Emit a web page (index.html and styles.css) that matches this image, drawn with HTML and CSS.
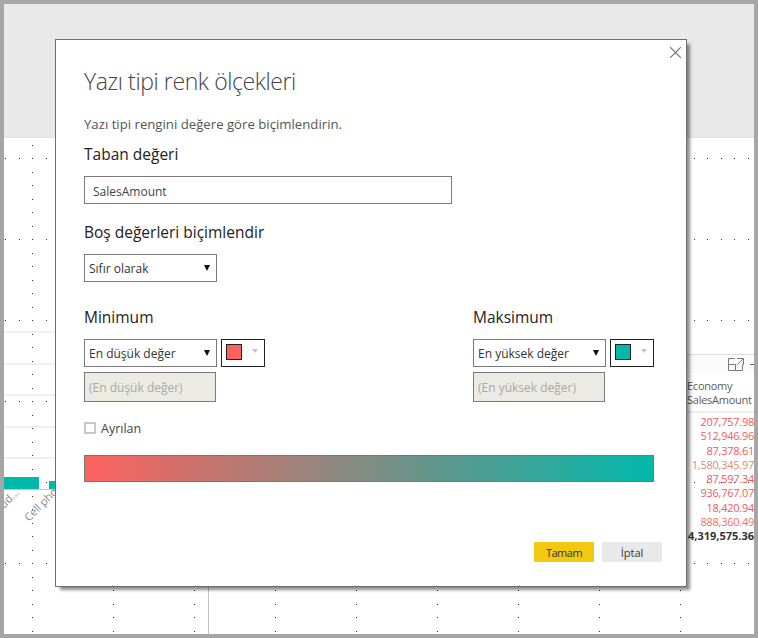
FILE: index.html
```html
<!DOCTYPE html>
<html lang="tr">
<head>
    <meta charset="UTF-8">
    <title>Yazı tipi renk ölçekleri</title>
    <link rel="stylesheet" href="styles.css">
</head>
<body>
    <div id="app">
        <div class="ribbon"></div>
        <div class="canvas">
            <svg class="dots" width="750" height="496">
                <defs>
                    <pattern id="dotCols" width="81" height="27" patternUnits="userSpaceOnUse">
                        <rect x="28" y="7" width="1" height="1"/>
                        <rect x="28" y="20" width="1" height="1"/>
                    </pattern>
                    <pattern id="dotRows" width="27" height="81" patternUnits="userSpaceOnUse">
                        <rect x="1" y="20" width="1" height="1"/>
                        <rect x="15" y="20" width="1" height="1"/>
                    </pattern>
                </defs>
                <rect width="750" height="496" fill="url(#dotCols)"/>
                <rect width="750" height="496" fill="url(#dotRows)"/>
            </svg>

            <div class="chart">
                <div class="chart-line"></div>
                <div class="chart-line"></div>
                <div class="chart-line"></div>
                <div class="chart-line"></div>
                <div class="chart-line"></div>
                <div class="bars">
                    <div class="bar bar-a"></div>
                    <div class="bar bar-b"></div>
                </div>
                <span class="axis-label label-a">ud...</span>
                <span class="axis-label label-b">Cell phones</span>
            </div>
            <div class="divider"></div>

            <div class="table-visual">
                <div class="table-tools">
                    <svg width="16" height="13" viewBox="0 0 16 13" fill="none" stroke="#7a7a7a">
                        <path d="M6.5 .5H.5V12.5H14.5V6.5M.5 6.5H7.5V12.5M9 .5H15.5V7M15 1L9 7"/>
                    </svg>
                    <span class="tools-more"></span>
                </div>
                <div class="table-head">Economy<br>SalesAmount</div>
                <div class="table-rows">
                    <div class="c1">207,757.98</div>
                    <div class="c2">512,946.96</div>
                    <div class="c1">87,378.61</div>
                    <div class="c3">1,580,345.97</div>
                    <div class="c1">87,597.34</div>
                    <div class="c2">936,767.07</div>
                    <div class="c1">18,420.94</div>
                    <div class="c4">888,360.49</div>
                    <div class="total">4,319,575.36</div>
                </div>
            </div>
        </div>

        <div class="dialog">
            <button class="close">
                <svg width="11" height="11" viewBox="0 0 11 11" stroke="#6e6e6e" stroke-width="1.1">
                    <path d="M0 0L11 11M11 0L0 11"/>
                </svg>
            </button>
            <h1>Yazı tipi renk ölçekleri</h1>
            <p class="intro">Yazı tipi rengini değere göre biçimlendirin.</p>

            <h2>Taban değeri</h2>
            <div class="text-field">SalesAmount</div>

            <h2 class="blank-title">Boş değerleri biçimlendir</h2>
            <div class="select blank-select">Sıfır olarak<span class="caret"></span></div>

            <div class="scale">
                <div class="scale-col">
                    <h2>Minimum</h2>
                    <div class="pick-row">
                        <div class="select">En düşük değer<span class="caret"></span></div>
                        <div class="swatch-btn"><span class="swatch swatch-min"></span><span class="swatch-caret"></span></div>
                    </div>
                    <div class="disabled-field">(En düşük değer)</div>
                </div>
                <div class="scale-col">
                    <h2>Maksimum</h2>
                    <div class="pick-row">
                        <div class="select">En yüksek değer<span class="caret"></span></div>
                        <div class="swatch-btn"><span class="swatch swatch-max"></span><span class="swatch-caret"></span></div>
                    </div>
                    <div class="disabled-field">(En yüksek değer)</div>
                </div>
            </div>

            <label class="check"><span class="box"></span>Ayrılan</label>
            <div class="gradient"></div>

            <div class="actions">
                <button class="btn btn-primary">Tamam</button>
                <button class="btn">İptal</button>
            </div>
        </div>
    </div>
</body>
</html>
```

FILE: styles.css
```css
* {
    box-sizing: border-box;
}
html, body {
    margin: 0;
    height: 100%;
}
body {
    background-color: #a6a6a6;
    padding: 4px;
    font-family: "Open Sans", "Noto Sans", Arial, sans-serif;
    overflow: hidden;
}
#app {
    height: 630px;
    display: flex;
    flex-direction: column;
    background-color: #fff;
}
.ribbon {
    height: 134px;
    background-color: #e9e9e9;
    border-bottom: 1px solid #e2e2e2;
}
.canvas {
    flex: 1;
    position: relative;
    overflow: hidden;
}
.dots {
    position: absolute;
    left: 0;
    top: 0;
    fill: #333;
}

/* chart behind the dialog */
.chart {
    position: absolute;
    left: 0;
    top: 193px;
    width: 120px;
}
.chart-line {
    height: 31.5px;
    border-top: 2px solid #f1f1f1;
}
.bars {
    position: absolute;
    left: 0;
    top: 146px;
    width: 120px;
    height: 13px;
    border-bottom: 1px solid #c8c8c8;
    display: flex;
    align-items: flex-end;
    gap: 10px;
}
.bar {
    background-color: #01b8aa;
}
.bar-a {
    width: 35px;
    height: 12px;
}
.bar-b {
    width: 30px;
    height: 8px;
}
.axis-label {
    position: absolute;
    font-size: 11px;
    color: #8a8a8a;
    white-space: nowrap;
    transform: rotate(-45deg);
    transform-origin: left bottom;
}
.label-a {
    left: 2px;
    top: 165px;
}
.label-b {
    left: 27px;
    top: 178px;
}
.divider {
    position: absolute;
    left: 204px;
    top: 440px;
    bottom: 0;
    width: 1px;
    background-color: #c4c4c4;
}

/* table on the right */
.table-visual {
    position: absolute;
    left: 680px;
    top: 216px;
    width: 70px;
    font-size: 11px;
    letter-spacing: -0.25px;
    overflow: hidden;
}
.table-tools {
    height: 19px;
    border-top: 1px solid #ddd;
    background-color: #fafafa;
    display: flex;
    justify-content: flex-end;
    align-items: center;
    gap: 6px;
}
.tools-more {
    width: 4px;
    height: 1px;
    background-color: #666;
}
.table-head {
    height: 40px;
    background-color: #fff;
    border-bottom: 2px solid #f0f0f0;
    padding: 6px 0 0 3px;
    line-height: 14px;
    color: #5c5c5c;
    white-space: nowrap;
}
.table-rows {
    padding-top: 2px;
    text-align: right;
    line-height: 14.3px;
}
.c1 {
    color: #f4575a;
}
.c2 {
    color: #f25e60;
}
.c3 {
    color: #d58c7c;
}
.c4 {
    color: #ee7264;
}
.total {
    color: #333;
    font-weight: 700;
    letter-spacing: 0;
}

/* dialog */
.dialog {
    position: absolute;
    left: 55px;
    top: 39px;
    width: 632px;
    height: 548px;
    padding: 25px 28px 0;
    background-color: #fff;
    border: 1px solid #6e6e6e;
    box-shadow: 4px 4px 3px -1px rgba(0, 0, 0, 0.45);
    color: #333;
}
.close {
    position: absolute;
    right: 5px;
    top: 7px;
    padding: 0;
    border: none;
    background: none;
    line-height: 0;
}
h1 {
    margin: 0;
    height: 32px;
    font-size: 23px;
    font-weight: 300;
    letter-spacing: -0.4px;
    line-height: 32px;
    color: #444;
}
.intro {
    margin: 18px 0 0;
    font-size: 13.2px;
    line-height: 18px;
    color: #555;
}
h2 {
    margin: 0;
    font-size: 15.5px;
    font-weight: 400;
    line-height: 20px;
    color: #222;
}
.dialog > h2 {
    margin-top: 11px;
}
.dialog > .blank-title {
    margin-top: 18px;
}
.text-field {
    width: 368px;
    height: 28px;
    margin-top: 12px;
    padding-left: 8px;
    border: 1px solid #7a7a7a;
    font-size: 12px;
    line-height: 29px;
    color: #444;
}
.select {
    position: relative;
    width: 133px;
    height: 28px;
    padding-left: 4px;
    border: 1px solid #7a7a7a;
    font-size: 12px;
    line-height: 28px;
    color: #333;
}
.blank-select {
    margin-top: 12px;
}
.caret {
    position: absolute;
    right: 6px;
    top: 10px;
    border-left: 3.5px solid transparent;
    border-right: 3.5px solid transparent;
    border-top: 6px solid #111;
}
.scale {
    display: flex;
    justify-content: space-between;
    width: 570px;
    margin-top: 25px;
}
.scale-col {
    width: 181px;
}
.pick-row {
    display: flex;
    gap: 4px;
    margin-top: 12px;
}
.swatch-btn {
    width: 44px;
    height: 28px;
    padding: 4px;
    border: 1px solid #222;
    display: flex;
    justify-content: space-between;
}
.swatch {
    width: 16px;
    height: 16px;
    border: 1px solid #222;
}
.swatch-min {
    background-color: #fd625e;
}
.swatch-max {
    background-color: #01b8aa;
}
.swatch-caret {
    margin: 5px 2px 0 0;
    width: 0;
    height: 0;
    border-left: 3.5px solid transparent;
    border-right: 3.5px solid transparent;
    border-top: 4px solid #c4c4c4;
}
.disabled-field {
    width: 132px;
    height: 30px;
    margin-top: 5px;
    padding-left: 4px;
    background-color: #ebebe4;
    border: 1px solid #7a7a7a;
    font-size: 12px;
    line-height: 30px;
    color: #a8a8a8;
}
.check {
    display: flex;
    align-items: center;
    gap: 5px;
    margin-top: 20px;
    height: 12px;
    font-size: 12.5px;
    color: #444;
}
.box {
    width: 12px;
    height: 12px;
    border: 2px solid #c8c8c8;
}
.gradient {
    width: 570px;
    height: 27px;
    margin-top: 21px;
    border: 1px solid #777;
    background: linear-gradient(to right, #fd625e, #01b8aa);
}
.actions {
    display: flex;
    justify-content: flex-end;
    gap: 8px;
    margin: 60px -4px 0 0;
}
.btn {
    width: 60px;
    height: 20px;
    padding: 0;
    border: none;
    background-color: #e9e9e9;
    font-family: inherit;
    font-size: 11px;
    color: #333;
}
.btn-primary {
    background-color: #f2c811;
    letter-spacing: -0.5px;
}
```
